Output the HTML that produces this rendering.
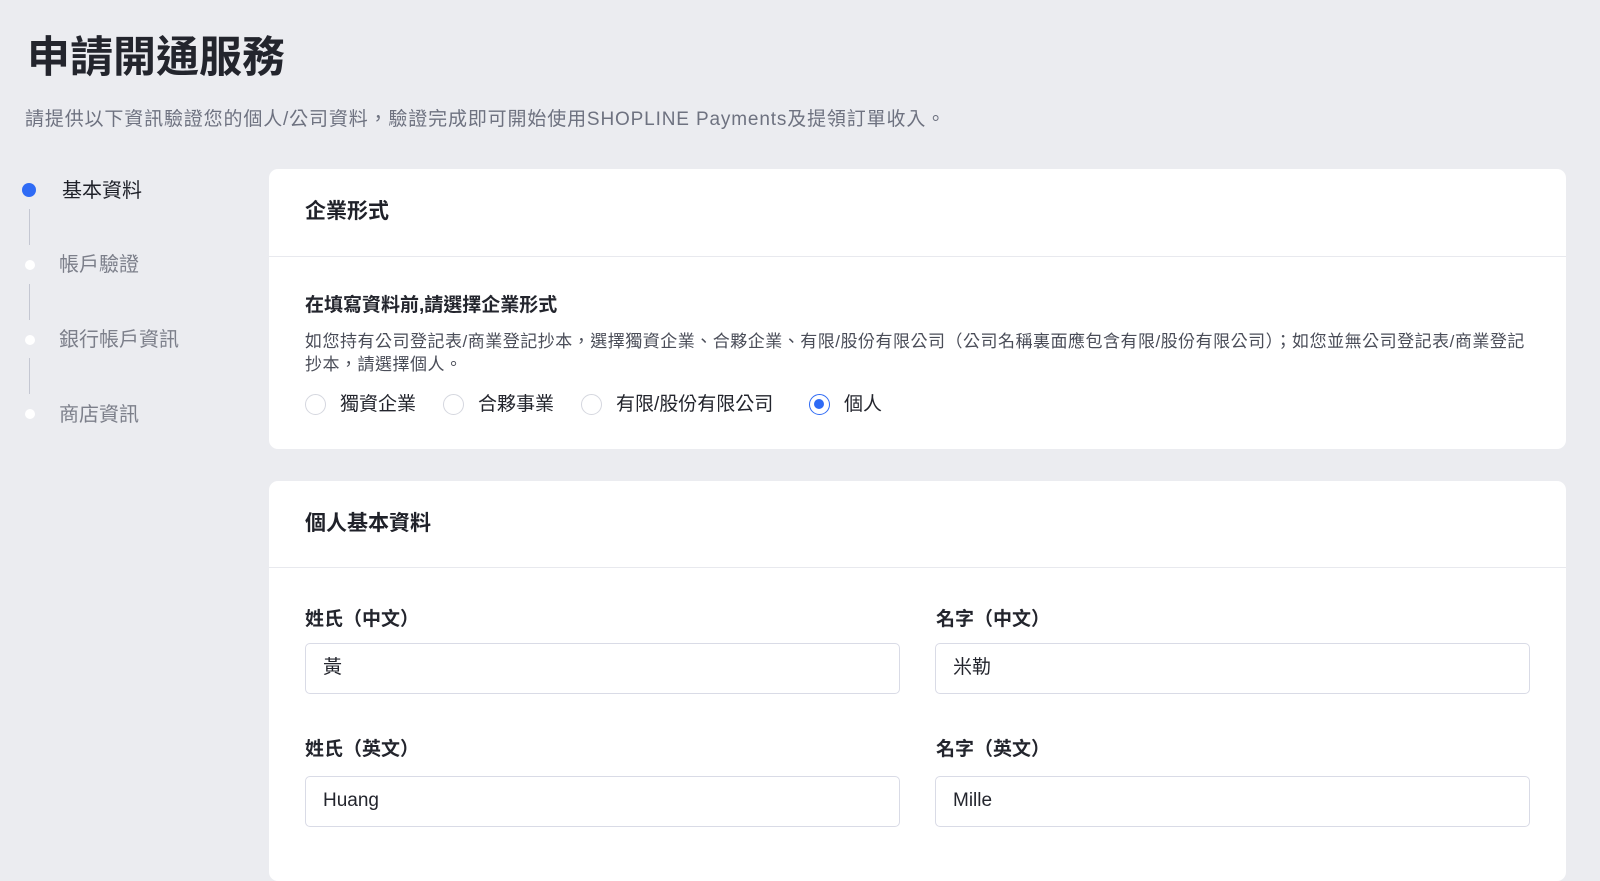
<!DOCTYPE html>
<html><head><meta charset="utf-8"><style>
*{box-sizing:border-box;margin:0;padding:0}
body{width:1600px;height:850px;overflow:hidden;background:#ebecf0;font-family:"Liberation Sans","Noto Sans CJK TC",sans-serif;color:#1f2129;position:relative}
.abs{position:absolute;white-space:nowrap}
h1{position:absolute;left:27px;top:33px;font-size:43px;font-weight:700;color:#23252d;line-height:50px}
.sub{left:25px;top:108px;font-size:19px;color:#6e7280;line-height:24px;letter-spacing:0.85px}
.dot{position:absolute;width:10px;height:10px;border-radius:50%;background:#fff;left:25px}
.line{position:absolute;left:29px;width:1px;height:36px;background:#c4c7d2}
.step{position:absolute;left:59px;font-size:20px;color:#7c7f8a;line-height:24px}
.card{position:absolute;left:269px;width:1297px;background:#fff;border-radius:9px}
.ch{position:absolute;left:36px;font-size:21px;font-weight:700;line-height:28px;color:#1f2129}
.hr{position:absolute;left:0;right:0;height:1px;background:#e8e9ee}
.lbl{position:absolute;font-size:19px;font-weight:700;line-height:24px;color:#23252d}
.inp{position:absolute;width:595px;height:51px;border:1.5px solid #d9dbe6;border-radius:5px;font-size:19px;line-height:48px;padding-left:17px;color:#23252d}
.radio{position:absolute;width:21px;height:21px;border-radius:50%;border:1.5px solid #d5d7df;background:#fff}
.rt{position:absolute;font-size:19px;line-height:24px;color:#23252d}
</style></head><body>
<h1>申請開通服務</h1>
<div class="abs sub">請提供以下資訊驗證您的個人/公司資料，驗證完成即可開始使用SHOPLINE Payments及提領訂單收入。</div>

<div class="dot" style="top:183px;left:22px;width:14px;height:14px;background:#2f6bf5"></div>
<div class="step" style="top:179px;left:62px;color:#1f2129">基本資料</div>
<div class="line" style="top:209px"></div>
<div class="dot" style="top:260px"></div>
<div class="step" style="top:253px">帳戶驗證</div>
<div class="line" style="top:284px"></div>
<div class="dot" style="top:335px"></div>
<div class="step" style="top:328px">銀行帳戶資訊</div>
<div class="line" style="top:358px"></div>
<div class="dot" style="top:409px"></div>
<div class="step" style="top:403px">商店資訊</div>

<div class="card" style="top:169px;height:280px">
  <div class="ch" style="top:29px">企業形式</div>
  <div class="hr" style="top:87px"></div>
  <div class="lbl" style="left:36px;top:125px">在填寫資料前,請選擇企業形式</div>
  <div class="abs" style="left:36px;top:161px;font-size:17px;line-height:23px;color:#4a4d58;letter-spacing:0.5px">如您持有公司登記表/商業登記抄本，選擇獨資企業、合夥企業、有限/股份有限公司（公司名稱裏面應包含有限/股份有限公司）；如您並無公司登記表/商業登記<br>抄本，請選擇個人。</div>
  <div class="radio" style="left:36px;top:225px"></div><div class="rt" style="left:71px;top:224px">獨資企業</div>
  <div class="radio" style="left:174px;top:225px"></div><div class="rt" style="left:209px;top:224px">合夥事業</div>
  <div class="radio" style="left:312px;top:225px"></div><div class="rt" style="left:347px;top:224px">有限/股份有限公司</div>
  <div class="radio" style="left:540px;top:225px;border-color:#2f6bf5"><div style="position:absolute;left:4px;top:4px;width:10px;height:10px;border-radius:50%;background:#2f6bf5"></div></div><div class="rt" style="left:575px;top:224px">個人</div>
</div>

<div class="card" style="top:481px;height:400px">
  <div class="ch" style="top:29px">個人基本資料</div>
  <div class="hr" style="top:86px"></div>
  <div class="lbl" style="left:36px;top:127px">姓氏（中文）</div>
  <div class="lbl" style="left:667px;top:127px">名字（中文）</div>
  <div class="inp" style="left:36px;top:162px">黃</div>
  <div class="inp" style="left:666px;top:162px">米勒</div>
  <div class="lbl" style="left:36px;top:257px">姓氏（英文）</div>
  <div class="lbl" style="left:667px;top:257px">名字（英文）</div>
  <div class="inp" style="left:36px;top:295px">Huang</div>
  <div class="inp" style="left:666px;top:295px">Mille</div>
</div>
</body></html>
